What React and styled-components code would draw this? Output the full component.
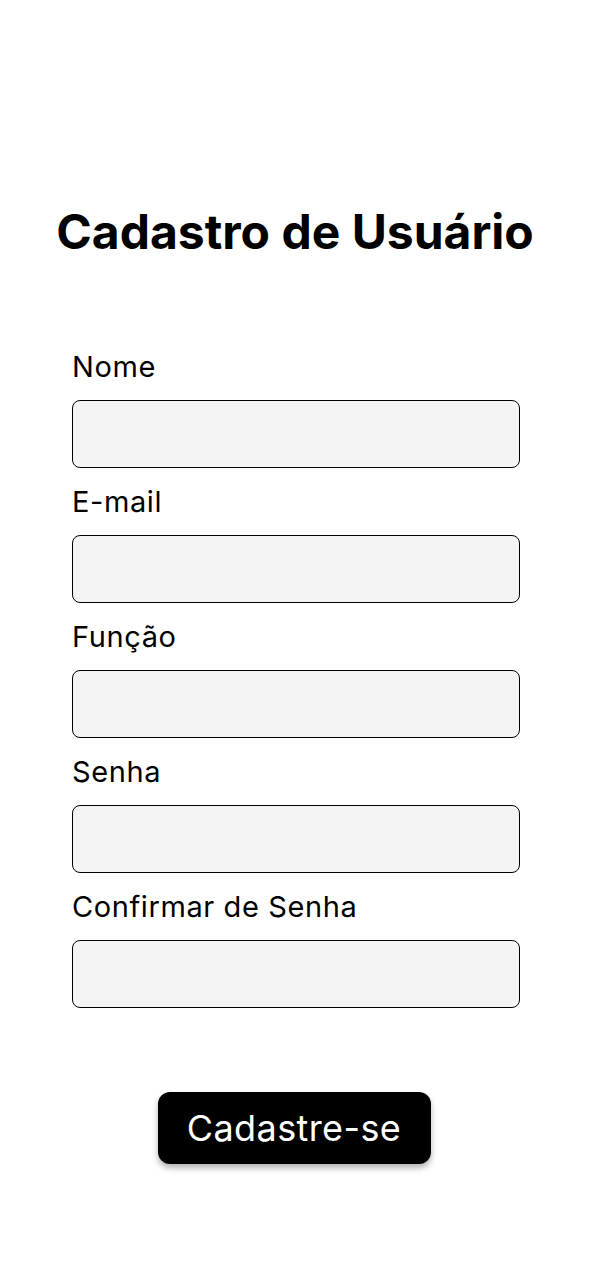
import React from 'react'
import styled, { createGlobalStyle } from 'styled-components'

const GlobalStyle = createGlobalStyle`
  body {
    margin: 0;
    background: #ffffff;
    font-family: Inter, "Noto Sans", sans-serif;
  }
`

const Page = styled.div`
  width: 590px;
  min-height: 1280px;
  display: flex;
  flex-direction: column;
  align-items: center;
  padding-top: 203px;
  box-sizing: border-box;
`

const Title = styled.h1`
  margin: 0;
  font-size: 48px;
  font-weight: 700;
  line-height: 58px;
  color: #000;
`

const Form = styled.form`
  width: 448px;
  margin-top: 89px;
  margin-left: 2px;
  display: flex;
  flex-direction: column;
  gap: 17px;
`

const Field = styled.div`
  display: flex;
  flex-direction: column;
  gap: 16px;
`

const Label = styled.label`
  font-size: 29px;
  line-height: 34px;
  letter-spacing: 0.6px;
  color: #000;
`

const Input = styled.input`
  height: 68px;
  box-sizing: border-box;
  border: 1.5px solid #000;
  border-radius: 8px;
  background: #f4f4f4;
  font-family: inherit;
  font-size: 22px;
  padding: 0 16px;
  outline: none;
`

const Button = styled.button`
  margin-top: 84px;
  margin-right: 2px;
  width: 273px;
  height: 72px;
  border: none;
  border-radius: 12px;
  background: #000;
  color: #fff;
  font-family: inherit;
  font-size: 36px;
  letter-spacing: 0.4px;
  box-shadow: 0 4px 6px rgba(0, 0, 0, 0.3);
  cursor: pointer;
`

const fields = [
  { id: 'nome', label: 'Nome', type: 'text' },
  { id: 'email', label: 'E-mail', type: 'email' },
  { id: 'funcao', label: 'Função', type: 'text' },
  { id: 'senha', label: 'Senha', type: 'password' },
  { id: 'confirmar', label: 'Confirmar de Senha', type: 'password' },
]

export default function App() {
  return (
    <>
      <GlobalStyle />
      <Page>
        <Title>Cadastro de Usuário</Title>
        <Form onSubmit={(e) => e.preventDefault()}>
          {fields.map((f) => (
            <Field key={f.id}>
              <Label htmlFor={f.id}>{f.label}</Label>
              <Input id={f.id} type={f.type} />
            </Field>
          ))}
        </Form>
        <Button type="button">Cadastre-se</Button>
      </Page>
    </>
  )
}
